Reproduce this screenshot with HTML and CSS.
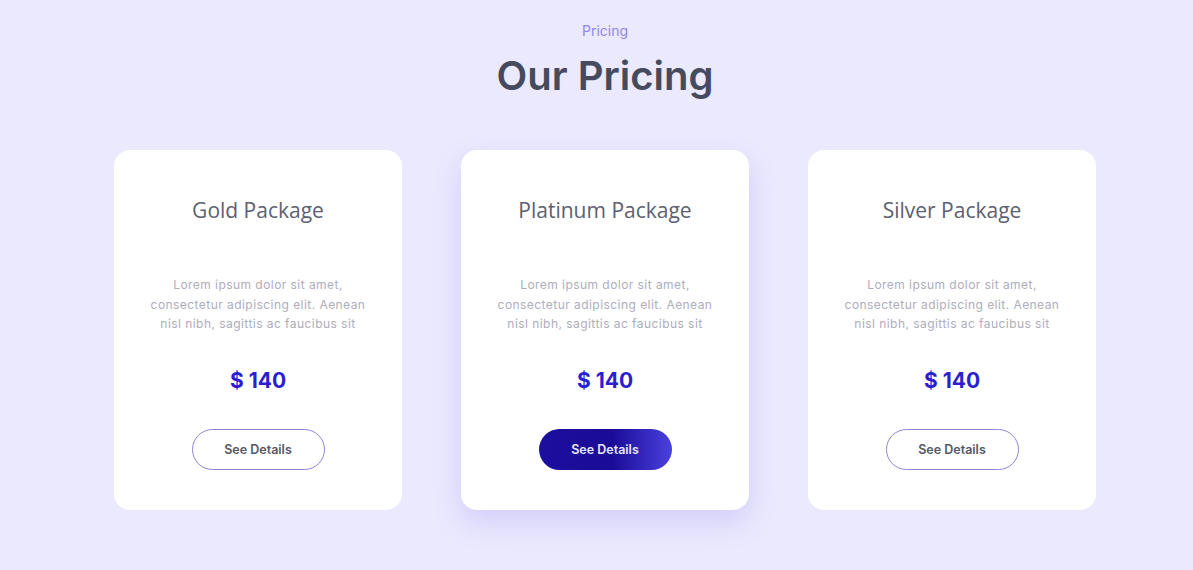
FILE: index.html
```html
<!DOCTYPE html>
<html>
<head>
<meta charset="utf-8">
<link rel="stylesheet" href="styles.css">
</head>
<body>
<section class="pricing">
  <div class="eyebrow">Pricing</div>
  <h1 class="title">Our Pricing</h1>
  <div class="cards">
    <div class="card">
      <h2 class="card-title">Gold Package</h2>
      <p class="card-desc">Lorem ipsum dolor sit amet,<br>consectetur adipiscing elit. Aenean<br>nisl nibh, sagittis ac faucibus sit</p>
      <div class="price">$ 140</div>
      <a class="btn">See Details</a>
    </div>
    <div class="card card-featured">
      <h2 class="card-title">Platinum Package</h2>
      <p class="card-desc">Lorem ipsum dolor sit amet,<br>consectetur adipiscing elit. Aenean<br>nisl nibh, sagittis ac faucibus sit</p>
      <div class="price">$ 140</div>
      <a class="btn btn-primary">See Details</a>
    </div>
    <div class="card">
      <h2 class="card-title">Silver Package</h2>
      <p class="card-desc">Lorem ipsum dolor sit amet,<br>consectetur adipiscing elit. Aenean<br>nisl nibh, sagittis ac faucibus sit</p>
      <div class="price">$ 140</div>
      <a class="btn">See Details</a>
    </div>
  </div>
</section>
</body>
</html>
```

FILE: styles.css
```css
* { box-sizing: border-box; }
html, body {
  margin: 0;
  background: #ebe9fe;
  height: 100%;
}
body {
  font-family: "Inter", "Noto Sans", sans-serif;
}
.pricing {
  padding: 20px 97px 0 114px;
  display: flex;
  flex-direction: column;
  align-items: center;
}
.eyebrow {
  font-size: 14px;
  line-height: 22px;
  color: #9088e2;
}
.title {
  margin: 8px 0 0;
  font-size: 40px;
  line-height: 52px;
  font-weight: 600;
  color: #454b5d;
  letter-spacing: 0;
}
.cards {
  margin-top: 48px;
  display: grid;
  grid-template-columns: repeat(3, 288px);
  gap: 59px;
}
.card {
  background: #fff;
  border-radius: 16px;
  height: 360px;
  padding: 46px 10px 0;
  display: flex;
  flex-direction: column;
  align-items: center;
}
.card-featured {
  box-shadow: 0 12px 28px rgba(120, 108, 230, 0.22);
}
.card-title {
  margin: 0;
  font-family: "Open Sans", "Noto Sans", sans-serif;
  font-weight: 400;
  font-size: 21px;
  line-height: 28px;
  color: #5c6070;
}
.card-desc {
  margin: 51px 0 0;
  text-align: center;
  white-space: nowrap;
  font-size: 12px;
  line-height: 19.5px;
  color: #adadbb;
  letter-spacing: 0.45px;
}
.price {
  margin-top: 32px;
  font-size: 21px;
  line-height: 30px;
  font-weight: 700;
  color: #2b1fd0;
}
.btn {
  margin-top: 33px;
  width: 133px;
  height: 41px;
  border-radius: 21px;
  border: 1px solid #8d84d6;
  display: flex;
  align-items: center;
  justify-content: center;
  font-size: 12.5px;
  font-weight: 600;
  color: #555866;
  cursor: pointer;
}
.btn-primary {
  border: none;
  color: #e8e6fb;
  background: linear-gradient(90deg, #1d0f9e 0%, #1a0c96 55%, #4a40de 100%);
}
```
